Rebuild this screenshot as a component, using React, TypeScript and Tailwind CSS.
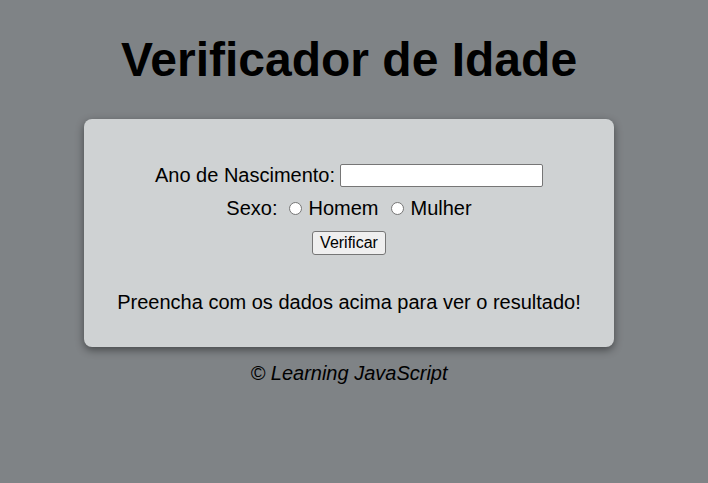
export default function App() {
  return (
    <div className="min-h-[483px] w-full bg-[#7f8386] font-['Liberation_Sans',Arial,sans-serif] text-black">
      <div className="w-[698px] flex flex-col items-center">
        <h1 className="mt-[30px] text-[48px] leading-[60px] font-bold">Verificador de Idade</h1>
        <div className="mt-[29px] w-[530px] h-[228px] rounded-[8px] bg-[#cfd2d3] shadow-[0_3px_8px_rgba(0,0,0,0.45)] flex flex-col items-center text-[20px] pt-[42px]">
          <div className="flex items-center h-[26px] translate-y-[1px]">
            <span>Ano de Nascimento:</span>
            <input type="number" className="ml-[5px] w-[203px] h-[23px] bg-white border border-[#767676] rounded-[2px] outline-none" />
          </div>
          <div className="flex items-center h-[26px] mt-[8px]">
            <span>Sexo:</span>
            <span className="ml-[11px] mr-[7px] w-[13px] h-[13px] rounded-full bg-white border border-[#767676]" />
            <span>Homem</span>
            <span className="ml-[12px] mr-[7px] w-[13px] h-[13px] rounded-full bg-white border border-[#767676]" />
            <span>Mulher</span>
          </div>
          <button className="mt-[10px] h-[24px] px-[7px] bg-[#efefef] border border-[#767676] rounded-[3px] text-[16px] leading-[18px]">Verificar</button>
          <p className="mt-[35px] leading-[24px]">Preencha com os dados acima para ver o resultado!</p>
        </div>
        <p className="mt-[14px] italic text-[20px] leading-[24px]">© Learning JavaScript</p>
      </div>
    </div>
  );
}
